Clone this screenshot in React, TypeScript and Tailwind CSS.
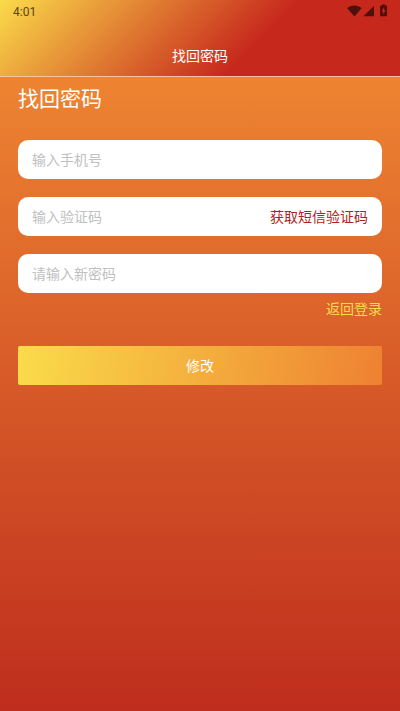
import React from "react";

function StatusIcons() {
  return (
    <svg width="42" height="16" viewBox="0 0 42 16" fill="#4f100b" aria-hidden="true">
      <path d="M0.2 4.2C4 0.6 10.8 0.6 14.6 4.2L7.4 12.4Z" />
      <path d="M27 2V12.2H16.4Z" />
      <path
        fillRule="evenodd"
        d="M35 0.4H38.2V1.4H39.3Q40 1.4 40 2.2V11.5Q40 12.2 39.3 12.2H33.8Q33.1 12.2 33.1 11.5V2.2Q33.1 1.4 33.8 1.4H35ZM37.2 3L34.6 7.4H36.1V10.6L38.6 6.2H37.2Z"
      />
    </svg>
  );
}

type FieldProps = {
  id: string;
  type: string;
  label: string;
  children?: React.ReactNode;
};

function Field({ id, type, label, children }: FieldProps) {
  return (
    <div className="flex h-[39px] items-center rounded-[10px] bg-white px-[14px]">
      <input
        id={id}
        type={type}
        aria-label={label}
        placeholder={label}
        className="h-full min-w-0 flex-1 bg-transparent text-sm text-gray-800 outline-none placeholder:text-[#c0c0c0]"
      />
      {children}
    </div>
  );
}

export default function App() {
  return (
    <div className="flex min-h-screen flex-col font-['Roboto','Noto_Sans_CJK_SC',sans-serif]">
      <header className="border-b border-[#f3c3a4] bg-[linear-gradient(135deg,#fbdb4a_0%,#c7281c_63%)]">
        <div className="flex h-6 items-center justify-between pr-[11px] pl-[13px]">
          <span className="text-xs text-[#5c4515]">4:01</span>
          <StatusIcons />
        </div>
        <div className="flex h-[52px] items-center justify-center pt-3">
          <span className="text-sm text-white">找回密码</span>
        </div>
      </header>
      <main className="flex-1 bg-[linear-gradient(180deg,#ee8432,#be2d1d)] px-[18px] pt-2">
        <h1 className="text-[21px] leading-7 text-white">找回密码</h1>
        <form className="mt-[27px] flex flex-col" onSubmit={(e) => e.preventDefault()}>
          <div className="flex flex-col gap-[18px]">
            <Field id="phone" type="tel" label="输入手机号" />
            <Field id="code" type="text" label="输入验证码">
              <button type="button" className="text-sm text-[#b3221a]">
                获取短信验证码
              </button>
            </Field>
            <Field id="password" type="password" label="请输入新密码" />
          </div>
          <a href="#login" className="mt-[6px] self-end text-sm text-[#fadc4a]">
            返回登录
          </a>
          <button
            type="submit"
            className="mt-[27px] h-[39px] rounded-xs bg-[linear-gradient(100deg,#fadc4a,#ee8131)] text-sm text-white"
          >
            修改
          </button>
        </form>
      </main>
    </div>
  );
}
